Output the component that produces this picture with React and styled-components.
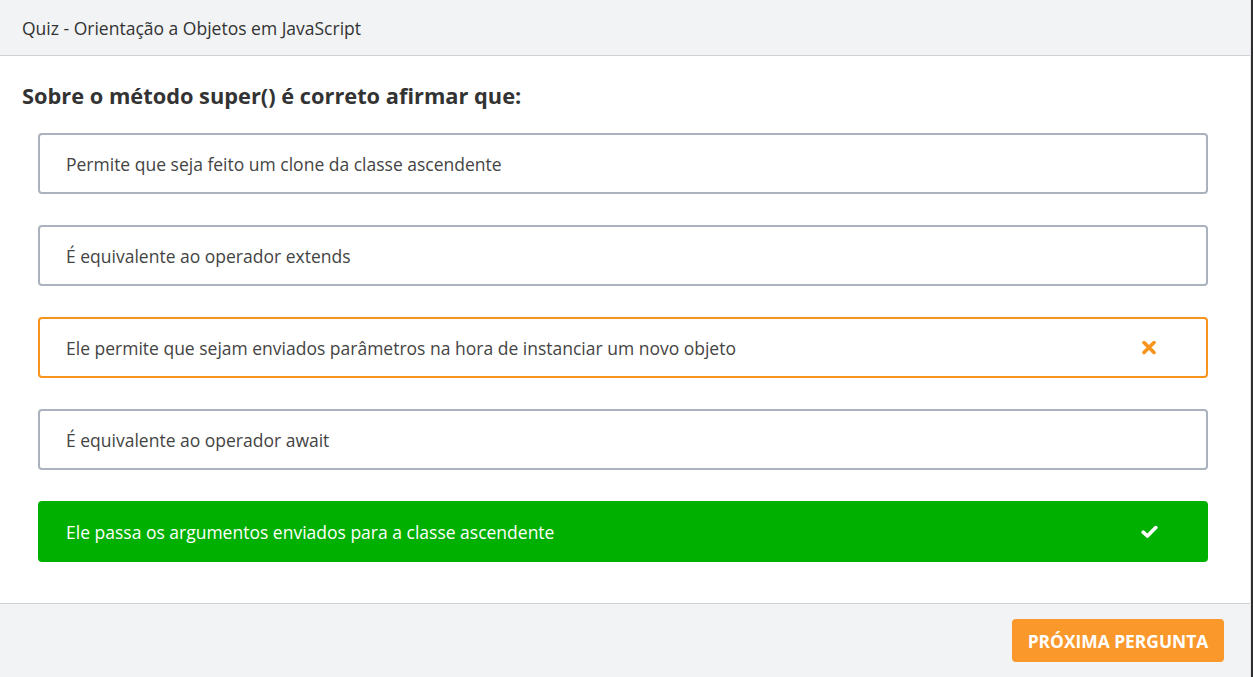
import React from 'react';
import styled, { createGlobalStyle } from 'styled-components';

const GlobalStyle = createGlobalStyle`
  html, body {
    margin: 0;
    padding: 0;
    background: #2e2e2e;
  }
  body {
    font-family: "Open Sans", "Liberation Sans", sans-serif;
  }
`;

const Page = styled.div`
  display: flex;
  height: 677px;
  width: 1253px;
  overflow: hidden;
`;

const Panel = styled.div`
  width: 1250px;
  display: flex;
  flex-direction: column;
  background: #ffffff;
  border-right: 1px solid #e4e6ea;
`;

const Header = styled.header`
  flex-shrink: 0;
  height: 55px;
  display: flex;
  align-items: center;
  padding: 0 22px;
  background: #f2f3f5;
  border-bottom: 1px solid #cfd2d7;
  color: #333;
  font-size: 17.5px;
`;

const Main = styled.main`
  flex: 1;
  padding: 26px 42px 41px 22px;
`;

const Question = styled.h2`
  margin: 0 0 23px;
  font-size: 21.8px;
  line-height: 28px;
  font-weight: 700;
  color: #333;
`;

const Options = styled.div`
  display: flex;
  flex-direction: column;
  gap: 31px;
  margin-left: 16px;
`;

const variants = {
  idle: { border: '#aab2bd', bg: '#fff', color: '#444', weight: 400 },
  wrong: { border: '#f7941d', bg: '#fff', color: '#444', weight: 400 },
  right: { border: '#00b000', bg: '#00b000', color: '#fff', weight: 500 },
};

const Option = styled.div`
  height: 61px;
  box-sizing: border-box;
  display: flex;
  align-items: center;
  justify-content: space-between;
  padding: 0 48px 0 26px;
  border: 2px solid ${p => variants[p.$state].border};
  border-radius: 4px;
  background: ${p => variants[p.$state].bg};
  color: ${p => variants[p.$state].color};
  font-weight: ${p => variants[p.$state].weight};
  font-size: 17.5px;
`;

const Mark = styled.svg`
  display: block;
  flex-shrink: 0;
`;

const CrossIcon = () => (
  <Mark width="17" height="14" viewBox="0 0 17 14">
    <path d="M3 1.5 L13 11.5 M13 1.5 L3 11.5" stroke="#f7941d" strokeWidth="3.6" strokeLinecap="round" fill="none" />
  </Mark>
);

const CheckIcon = () => (
  <Mark width="17" height="14" viewBox="0 0 17 14">
    <path d="M2.2 7.2 L6.4 11 L14.8 2.6" stroke="#fff" strokeWidth="3.6" strokeLinecap="round" strokeLinejoin="round" fill="none" />
  </Mark>
);

const Footer = styled.footer`
  flex-shrink: 0;
  height: 73px;
  display: flex;
  align-items: flex-start;
  justify-content: flex-end;
  padding: 15px 26px 0;
  background: #f2f3f5;
  border-top: 1px solid #cfd2d7;
`;

const NextButton = styled.button`
  width: 212px;
  height: 43px;
  border: none;
  border-radius: 4px;
  background: #fb982c;
  color: #fff;
  font-family: inherit;
  font-size: 17.4px;
  font-weight: 700;
  cursor: pointer;
`;

const answers = [
  { text: 'Permite que seja feito um clone da classe ascendente', state: 'idle' },
  { text: 'É equivalente ao operador extends', state: 'idle' },
  { text: 'Ele permite que sejam enviados parâmetros na hora de instanciar um novo objeto', state: 'wrong' },
  { text: 'É equivalente ao operador await', state: 'idle' },
  { text: 'Ele passa os argumentos enviados para a classe ascendente', state: 'right' },
];

const App = () => {
  return (
    <Page>
      <GlobalStyle />
      <Panel>
        <Header>Quiz - Orientação a Objetos em JavaScript</Header>
        <Main>
          <Question>Sobre o método super() é correto afirmar que:</Question>
          <Options>
            {answers.map(a => (
              <Option key={a.text} $state={a.state}>
                <span>{a.text}</span>
                {a.state === 'wrong' && <CrossIcon />}
                {a.state === 'right' && <CheckIcon />}
              </Option>
            ))}
          </Options>
        </Main>
        <Footer>
          <NextButton>PRÓXIMA PERGUNTA</NextButton>
        </Footer>
      </Panel>
    </Page>
  );
};

export default App;
